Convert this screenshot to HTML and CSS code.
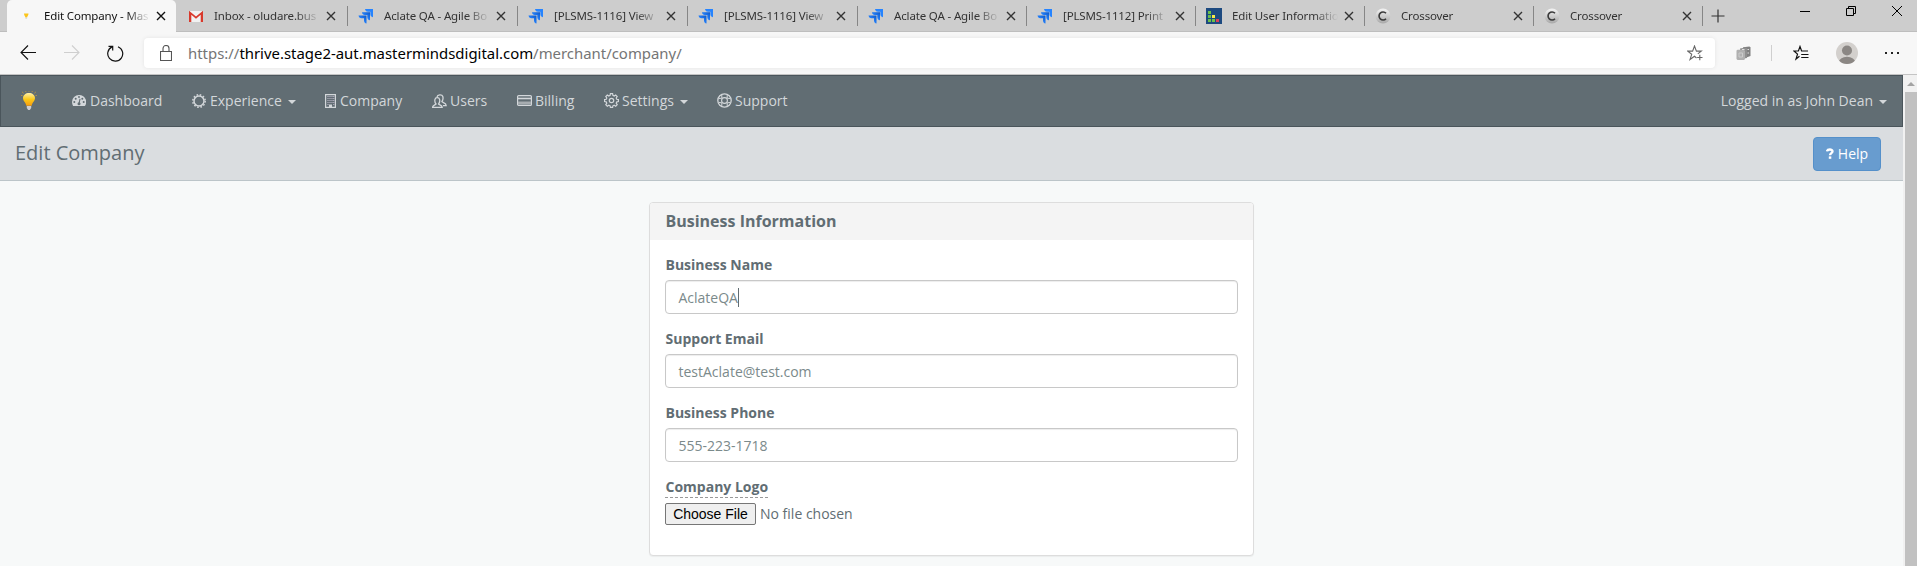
FILE: index.html
```html
<!DOCTYPE html>
<html lang="en">
<head>
<meta charset="utf-8">
<title>Edit Company</title>
<link rel="stylesheet" href="styles.css">
</head>
<body>
<svg width="0" height="0" class="defs">
  <defs>
    <linearGradient id="jg" x1="1" y1="0" x2="0" y2="1"><stop offset="0" stop-color="#0b57c8"/><stop offset=".6" stop-color="#2684ff"/></linearGradient>
    <linearGradient id="bg" x1="0" y1="0" x2="0" y2="1"><stop offset="0" stop-color="#fff0a8"/><stop offset=".5" stop-color="#fbc918"/><stop offset="1" stop-color="#f79c10"/></linearGradient>
    <linearGradient id="cg" x1="0" y1="0" x2="0" y2="1"><stop offset="0" stop-color="#f4f4f4"/><stop offset="1" stop-color="#a8a8a8"/></linearGradient>
    <symbol id="jira" viewBox="0 0 16 16">
      <path fill="#2684ff" d="M7 1h8v8.200c-1.700-.300-2.600-1.500-2.600-3V3.700H10C8.300 3.700 7.200 2.600 7 1z"/>
      <path fill="url(#jg)" d="M4 4.200h8v8c-1.700-.300-2.700-1.400-2.700-3V6.900H6.800C5.200 6.900 4.100 5.900 4 4.200z"/>
      <path fill="url(#jg)" d="M.500 7.500h8V15.600C6.900 15.300 6 14.200 6 12.600v-2.400H3.400C1.700 10.200.700 9.100.500 7.500z"/>
    </symbol>
    <symbol id="x" viewBox="0 0 10 10"><path d="M1 1l8 8M9 1l-8 8" fill="none" stroke="currentColor" stroke-width="1.400"/></symbol>
    <symbol id="cross" viewBox="0 0 16 16"><circle cx="8" cy="8" r="7.500" fill="url(#cg)"/><path d="M11 5.300A4 4 0 1 0 11 10.700" fill="none" stroke="#3a3a3a" stroke-width="1.600"/></symbol>
  </defs>
</svg>

<div class="tabs">
  <div class="tab active"><svg class="fav" viewBox="0 0 16 16"><path d="M6 5.500h4.500c0 2-1.200 2.500-1.400 4H7.400C7.200 8 6 7.500 6 5.500z" fill="#fbc51b"/><path d="M7.400 9.500h1.700v1.200H7.400z" fill="#d5d2cb"/></svg><span class="title">Edit Company - Mas</span><svg class="close"><use href="#x"/></svg></div>
  <div class="tab nosep"><svg class="fav" viewBox="0 0 16 16"><path d="M2 3h12v11H2z" fill="#f1f1f1"/><path d="M1 14V2.800L8 8.600l7-5.800V14h-2.300V6.800L8 10.700 3.300 6.800V14z" fill="#d8392c"/></svg><span class="title">Inbox - oludare.bus</span><svg class="close"><use href="#x"/></svg></div>
  <div class="tab"><svg class="fav"><use href="#jira"/></svg><span class="title">Aclate QA - Agile Bo</span><svg class="close"><use href="#x"/></svg></div>
  <div class="tab"><svg class="fav"><use href="#jira"/></svg><span class="title">[PLSMS-1116] View</span><svg class="close"><use href="#x"/></svg></div>
  <div class="tab"><svg class="fav"><use href="#jira"/></svg><span class="title">[PLSMS-1116] View</span><svg class="close"><use href="#x"/></svg></div>
  <div class="tab narrow"><svg class="fav"><use href="#jira"/></svg><span class="title">Aclate QA - Agile Bo</span><svg class="close"><use href="#x"/></svg></div>
  <div class="tab narrow"><svg class="fav"><use href="#jira"/></svg><span class="title">[PLSMS-1112] Print</span><svg class="close"><use href="#x"/></svg></div>
  <div class="tab narrow"><svg class="fav" viewBox="0 0 16 16"><path fill="#1d4a80" d="M0 0h16v16H0z"/><path fill="#6cc04a" d="M2 3h3v3H2zM2 7h3v3H2zM2 11h3v3H2zM6 11h3v3H6z"/><path fill="#f7e948" d="M6 7h3v3H6z"/><path fill="#d8405a" d="M10 11h3v3h-3z"/></svg><span class="title">Edit User Informatio</span><svg class="close"><use href="#x"/></svg></div>
  <div class="tab narrow"><svg class="fav"><use href="#cross"/></svg><span class="title">Crossover</span><svg class="close"><use href="#x"/></svg></div>
  <div class="tab narrow"><svg class="fav"><use href="#cross"/></svg><span class="title">Crossover</span><svg class="close"><use href="#x"/></svg></div>
  <svg class="newtab" viewBox="0 0 14 14"><path d="M7 .500v13M.500 7h13" stroke="#333" stroke-width="1.200"/></svg>
  <div class="winbtns">
    <svg width="10" height="12" viewBox="0 0 10 12"><path d="M0 6.500h10" stroke="#000"/></svg>
    <svg width="10" height="12" viewBox="0 0 10 12"><path d="M.500 3.500h7v7h-7zM2.500 3.500v-2h7v7h-2" fill="none" stroke="#000"/></svg>
    <svg width="10" height="12" viewBox="0 0 10 12"><path d="M0 1l10 10M10 1L0 11" stroke="#000"/></svg>
  </div>
</div>

<div class="toolbar">
  <svg class="back" viewBox="0 0 16 16"><path d="M16 7.500H1M8 .500L1 7.500l7 7" fill="none" stroke="#111" stroke-width="1.100"/></svg>
  <svg class="fwd" viewBox="0 0 16 16"><path d="M0 7.500h15M8 .500l7 7-7 7" fill="none" stroke="#cfcfcf" stroke-width="1.100"/></svg>
  <svg class="reload" viewBox="0 0 17 17"><path d="M11 1.700A7.500 7.500 0 1 1 5 1.900M1.500 1.300H5.700V5.500" fill="none" stroke="#111" stroke-width="1.200"/></svg>
  <div class="address">
    <svg class="lock" viewBox="0 0 12 16"><path d="M.500 6.500h11v9H.500zM3 6.500V3.500a3 3 0 0 1 6 0v3" fill="none" stroke="#555" stroke-width="1.100"/></svg>
    <span class="url">https://<b>thrive.stage2-aut.mastermindsdigital.com</b>/merchant/company/</span>
    <svg class="star" viewBox="0 0 16 16"><path d="M9.500 13L7.500 11.300 3 14.500 4.700 9.300.700 6.100h4.900L7.500 1l1.900 5.100h4.900l-3.500 2.800M12.800 9.800v5.400M10.100 12.500h5.400" fill="none" stroke="#666" stroke-width="1.100"/></svg>
  </div>
  <svg class="ext" viewBox="0 0 15 15"><path d="M7 1.200L13.500.500 14.500 1.500V10L9 12z" fill="#808080"/><path d="M4 2.500L10 1.500 11 2.500V12L5 13z" fill="#8f8f8f"/><path d="M.500 4.500L1.500 3.800H8L9 5V13L8 14H1.500L.500 13z" fill="#b0b0b0"/><path d="M3 7h3.500v4H3z" fill="none" stroke="#ccc"/><path d="M6 3.500h2.500M11.500 3.500h1.500M11.500 7h1.500" stroke="#ddd"/></svg>
  <i class="vline"></i>
  <svg class="favs" viewBox="0 0 16 16"><path d="M6.500 11.200L3 14 4.500 9.100 1 6h4.400L7 1.500 8.600 6H15M8.200 9.500H15.500M8.200 12.500H15.500" fill="none" stroke="#111" stroke-width="1.200"/></svg>
  <svg class="avatar" viewBox="0 0 22 22"><defs><clipPath id="av"><circle cx="11" cy="11" r="11"/></clipPath></defs><g clip-path="url(#av)"><path fill="#d3d0cd" d="M0 0h22v22H0z"/><circle cx="11" cy="8.500" r="5" fill="#8b8784"/><ellipse cx="11" cy="20.500" rx="8.300" ry="5.800" fill="#8b8784"/></g></svg>
  <svg class="dots" viewBox="0 0 14 2"><path d="M0 0h2v2H0zM6 0h2v2H6zM12 0h2v2h-2z" fill="#222"/></svg>
</div>

<div class="viewport">
  <div class="page">
    <nav class="navbar">
      <svg class="brand" viewBox="0 0 16 19"><path d="M8 2C4.700 2 2 4.100 2 7c0 3 2.800 4.400 3.300 7.700h5.400C11.200 11.400 14 10 14 7c0-2.900-2.700-5-6-5z" fill="url(#bg)"/><path d="M5.800 15h4.400v2L8.800 19H7.200l-1.400-2z" fill="#cfcdd0"/><path d="M1 .800l1.700 1.500M4.500 0l.600 1M8 0v.800M11.500 0l-.600 1M15 .800l-1.700 1.500M0 4.500h1.500M16 4.500h-1.500" stroke="#c59b3b" stroke-width=".8"/></svg>
      <a class="item dash"><svg width="14" height="13" viewBox="0 0 14 13"><path fill="#d3d7da" d="M7 1a7 7 0 0 0-7 7c0 1.500.400 2.800 1.100 4h11.800A7 7 0 0 0 7 1z"/><path d="M7 10L8 4.800" stroke="#616d73" stroke-width="1.100"/><g fill="#616d73"><circle cx="7" cy="9.700" r="1.500"/><circle cx="2.300" cy="8" r="1"/><circle cx="3.700" cy="4.700" r="1"/><circle cx="7" cy="3" r=".9"/><circle cx="10.300" cy="4.700" r="1"/><circle cx="11.700" cy="8" r="1"/></g></svg>Dashboard</a>
      <a class="item exp"><svg width="14" height="14" viewBox="0 0 14 14"><circle cx="7" cy="7" r="5" fill="none" stroke="#d3d7da" stroke-width="1.500"/><circle cx="7" cy="7" r="6.200" fill="none" stroke="#d3d7da" stroke-width="1.500" stroke-dasharray="1.600 1.646"/></svg>Experience<i class="caret"></i></a>
      <a class="item comp"><svg width="11" height="14" viewBox="0 0 11 14"><path d="M.600.600h9.800v12.800H.600z" fill="none" stroke="#d3d7da" stroke-width="1.200"/><path d="M2.500 2.500h1M4.500 2.500h1M6.500 2.500h1M8.300 2.500h1M2.500 4.500h1M4.500 4.500h1M6.500 4.500h1M8.300 4.500h1M2.500 6.500h1M4.500 6.500h1M6.500 6.500h1M8.300 6.500h1M2.500 8.500h1M4.500 8.500h1M6.500 8.500h1M8.300 8.500h1M2.500 10.500h1M8.300 10.500h1" stroke="#c7bfd2"/><path d="M4 10.500h3V13H4z" fill="#d3d7da"/></svg>Company</a>
      <a class="item users"><svg width="15" height="14" viewBox="0 0 15 14"><path d="M.600 13.300c0-2.300 2.600-2.300 3.400-3.300C2.900 8.500 2.600 6.800 3 5.300 3.400 3.200 7 3 7.600 5.300c.400 1.600 0 3.300-1 4.700.8 1 3.600 1 3.600 3.300zM5 3C5.400.300 10 0 10.800 2.500c.500 1.800.200 3.600-.900 5.200.8 1.200 4.300 1.200 4.300 4H11" fill="none" stroke="#d3d7da" stroke-width="1.300"/></svg>Users</a>
      <a class="item bill"><svg width="15" height="11" viewBox="0 0 15 11"><rect x=".600" y=".600" width="13.800" height="9.800" rx="1" fill="none" stroke="#d3d7da" stroke-width="1.200"/><path d="M1 3.500h13" stroke="#d3d7da" stroke-width="1.600"/><path d="M1 6.500h13v3H1z" fill="#a7adb1"/></svg>Billing</a>
      <a class="item set"><svg width="15" height="15" viewBox="0 0 15 15"><path d="M6.400.700h2.200l.300 1.700 1.300.600 1.500-1 1.500 1.500-1 1.500.600 1.300 1.600.300v2l-1.600.300-.600 1.300 1 1.500-1.500 1.500-1.500-1-1.300.600-.300 1.600H6.400l-.300-1.600-1.300-.600-1.500 1-1.500-1.500 1-1.500-.600-1.300-1.600-.300v-2l1.600-.300.600-1.300-1-1.500L3.300 2l1.500 1 1.300-.600z" fill="none" stroke="#d3d7da" stroke-width="1.200"/><circle cx="7.500" cy="7.500" r="2.200" fill="none" stroke="#d3d7da" stroke-width="1.200"/></svg>Settings<i class="caret"></i></a>
      <a class="item sup"><svg width="15" height="15" viewBox="0 0 15 15"><g fill="none" stroke="#d3d7da"><circle cx="7.500" cy="7.500" r="6.700" stroke-width="1.300"/><circle cx="7.500" cy="7.500" r="2.900" stroke-width="1.100"/><path d="M4.800 2v3.200L2 5.500M10.200 2v3.200l2.800.300M4.800 13V9.800L2 9.500M10.200 13V9.800l2.800-.300"/></g></svg>Support</a>
      <a class="item user">Logged in as John Dean<i class="caret"></i></a>
    </nav>
    <header class="heading">
      <h1>Edit Company</h1>
      <a class="help"><svg width="8" height="11" viewBox="0 0 8 11"><path d="M1 3.400C1.300.800 6.500.800 6.500 3.300c0 2-2.400 1.700-2.500 4" fill="none" stroke="#fff" stroke-width="2.400"/><path d="M2.800 8.400h2.500v2.400H2.800z" fill="#fff"/></svg><span>Help</span></a>
    </header>
    <main class="card">
      <h2>Business Information</h2>
      <form class="fields">
        <label>Business Name</label>
        <div class="input"><span class="cursor">AclateQA</span></div>
        <label>Support Email</label>
        <div class="input"><span>testAclate@test.com</span></div>
        <label>Business Phone</label>
        <div class="input"><span>555-223-1718</span></div>
        <label class="hint">Company Logo</label>
        <div class="file"><span class="choose">Choose File</span><span class="none">No file chosen</span></div>
      </form>
    </main>
  </div>
  <div class="scroll"><svg viewBox="0 0 8 4"><path d="M4 0l4 4H0z" fill="#a3a3a3"/></svg><i></i></div>
</div>
</body>
</html>
```

FILE: styles.css
```css
* { box-sizing: border-box; }
body { margin: 0; width: 1917px; height: 566px; overflow: hidden; font-family: "Open Sans", sans-serif; font-size: 14px; color: #616d73; background: #f7f9f9; }
svg { display: block; flex: none; }
.defs { position: absolute; }

.tabs { display: flex; height: 32px; padding-left: 7px; background: #cdcdcd; border-bottom: 1px solid #bebebe; font-family: "Noto Sans", sans-serif; }
.tab { position: relative; display: flex; align-items: center; width: 170px; height: 32px; padding-left: 11px; color: #333; }
.tab.narrow { width: 169px; }
.tab::after { content: ""; position: absolute; right: -1px; top: 6px; width: 1px; height: 20px; background: #868686; }
.tab.active::after { display: none; }
.tab.active { background: #f7f7f7; border-radius: 5px 5px 0 0; color: #111; width: 169px; margin-right: 1px; }
.fav { width: 16px; height: 16px; }
.title { width: 113px; margin-left: 10px; white-space: nowrap; font-size: 11.5px; letter-spacing: -0.15px; line-height: 18px; mask-image: linear-gradient(90deg, #000 82px, transparent 106px); }
.close { width: 10px; height: 10px; margin-left: -1px; }
.newtab { width: 14px; height: 14px; margin: 9px 0 0 9px; }
.winbtns { display: flex; gap: 36px; margin: 5px 15px 0 auto; }

.toolbar { display: flex; align-items: center; height: 43px; background: #f7f7f7; border-bottom: 1px solid #c4c4c4; }
.back { width: 16px; height: 16px; margin-left: 20px; }
.fwd { width: 16px; height: 16px; margin-left: 28px; }
.reload { width: 17px; height: 17px; margin-left: 27px; }
.address { display: flex; align-items: center; width: 1571px; height: 30px; margin-left: 20px; padding: 0 12px 0 16px; background: #fff; border-radius: 4px; box-shadow: 0 0 4px rgba(0,0,0,.08); }
.lock { width: 12px; height: 16px; }
.url { margin-left: 16px; font-family: "Noto Sans", sans-serif; font-size: 14.92px; color: #757575; white-space: nowrap; }
.url b { font-weight: 400; color: #000; }
.star { width: 16px; height: 16px; margin-left: auto; }
.ext { width: 15px; height: 15px; margin-left: 21px; }
.vline { width: 1px; height: 16px; margin-left: 20px; background: #cfcfcf; }
.favs { width: 16px; height: 16px; margin-left: 21px; }
.avatar { width: 22px; height: 22px; margin-left: 27px; }
.dots { width: 14px; height: 2px; margin-left: 27px; }

.viewport { display: flex; height: 491px; }
.page { width: 1903px; }
.navbar { display: flex; align-items: center; height: 52px; padding-bottom: 1px; background: #616d73; border: 1px solid #4a555b; color: #d3d7da; }
.brand { width: 16px; height: 19px; margin-left: 20px; }
.item { display: flex; align-items: center; gap: 4px; padding: 0 15px; line-height: 19px; white-space: nowrap; }
.dash { margin-left: 20px; width: 120px; }
.exp { width: 133px; }
.comp { width: 107px; }
.users { width: 85px; gap: 3px; }
.bill { width: 87px; gap: 3px; }
.set { width: 113px; gap: 3px; }
.sup { gap: 3px; }
.user { margin-left: auto; }
.caret { margin: 3px 0 0 2px; border: 4px solid transparent; border-top-color: #d3d7da; border-bottom: 0; }
.set .caret { margin-left: 3px; }
.heading { display: flex; align-items: center; justify-content: space-between; height: 54px; padding: 0 22px 0 15px; background: #dadde0; border-bottom: 1px solid #bcc5c9; }
h1 { margin: 0 0 2px; font-size: 20px; font-weight: 400; line-height: 28px; }
.help { display: flex; align-items: center; justify-content: center; gap: 4px; width: 68px; height: 34px; background: #689ccf; border: 1px solid #5590ca; border-radius: 4px; color: #fff; }
.card { width: 605px; height: 354px; margin: 21px 0 0 649px; background: #fff; border: 1px solid #ddd; border-radius: 4px; box-shadow: 0 1px 1px rgba(0,0,0,.05); }
h2 { margin: 0; height: 37px; padding-left: 15.5px; background: #f4f4f4; border-radius: 3px 3px 0 0; font-size: 16px; line-height: 37px; }
.fields { display: flex; flex-direction: column; align-items: flex-start; padding: 15px; }
label { margin-bottom: 5px; padding-left: .5px; font-weight: 700; line-height: 20px; }
.input { display: flex; align-items: center; width: 573px; height: 34px; margin-bottom: 15px; padding-left: 12.5px; border: 1px solid #c8c8c8; border-radius: 4px; box-shadow: inset 0 1px 1px rgba(0,0,0,.075); color: #7b8a8b; }
.cursor { margin-right: 0; border-right: 1px solid #616d73; }
.hint { margin-bottom: 5px; border-bottom: 1px dashed #999; }
.file { display: flex; align-items: center; gap: 4px; height: 22px; }
.none { padding-bottom: 2px; }
.choose { width: 91px; height: 22px; border: 1px solid #767676; border-radius: 2px; background: #efefef; color: #000; font: 14px/20px "Liberation Sans", sans-serif; text-align: center; }
.scroll { display: flex; flex-direction: column; align-items: flex-end; width: 14px; background: #f1f1f1; }
.scroll svg { width: 8px; height: 4px; margin: 7px 2px 6px 0; }
.scroll i { flex: 1; width: 12px; background: #c1c1c1; }
```
